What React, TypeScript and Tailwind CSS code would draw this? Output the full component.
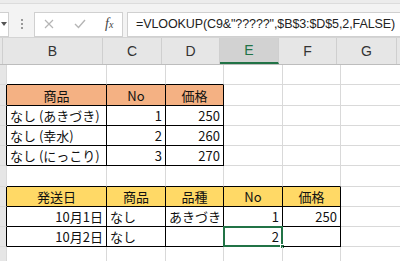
import React from "react";

const cols = [3, 100, 59, 58, 59, 58, 60, 10];
const rowHeights = [20, 21, 20, 20, 20, 21, 20, 20, 20, 20];

type Cell = { t?: string; align?: "l" | "r" | "c"; bg?: string };

// table regions: [rowStart,rowEnd,colStart,colEnd] (inclusive, col indexes into cols)
const tables = [
  [1, 4, 1, 3],
  [6, 8, 1, 5],
];

const inTable = (r: number, c: number) =>
  tables.some(([r0, r1, c0, c1]) => r >= r0 && r <= r1 && c >= c0 && c <= c1);

const data: Record<string, Cell> = {
  "1-1": { t: "商品", align: "c", bg: "bg-[#f4b183]" },
  "1-2": { t: "No", align: "c", bg: "bg-[#f4b183]" },
  "1-3": { t: "価格", align: "c", bg: "bg-[#f4b183]" },
  "2-1": { t: "なし (あきづき)" },
  "2-2": { t: "1", align: "r" },
  "2-3": { t: "250", align: "r" },
  "3-1": { t: "なし (幸水)" },
  "3-2": { t: "2", align: "r" },
  "3-3": { t: "260", align: "r" },
  "4-1": { t: "なし (にっこり)" },
  "4-2": { t: "3", align: "r" },
  "4-3": { t: "270", align: "r" },
  "6-1": { t: "発送日", align: "c", bg: "bg-[#ffd966]" },
  "6-2": { t: "商品", align: "c", bg: "bg-[#ffd966]" },
  "6-3": { t: "品種", align: "c", bg: "bg-[#ffd966]" },
  "6-4": { t: "No", align: "c", bg: "bg-[#ffd966]" },
  "6-5": { t: "価格", align: "c", bg: "bg-[#ffd966]" },
  "7-1": { t: "10月1日", align: "r" },
  "7-2": { t: "なし" },
  "7-3": { t: "あきづき" },
  "7-4": { t: "1", align: "r" },
  "7-5": { t: "250", align: "r" },
  "8-1": { t: "10月2日", align: "r" },
  "8-2": { t: "なし" },
  "8-4": { t: "2", align: "r" },
};

const letters = ["", "B", "C", "D", "E", "F", "G", ""];

export default function App() {
  return (
    <div
      className="w-[400px] h-[261px] overflow-hidden bg-white"
      style={{ fontFamily: '"Liberation Sans", "Noto Sans CJK JP", sans-serif' }}
    >
      {/* formula bar */}
      <div className="h-[38px] bg-[#f3f3f3] border-b border-[#d4d4d4] flex flex-col">
        <div className="h-[4px] bg-[#ececec] border-b border-[#dcdcdc]" />
        <div className="flex items-start pt-[8px] h-[34px]">
          <div className="shrink-0 w-[9px] h-[25px] bg-white border border-l-0 border-[#d0d0d0] flex items-center justify-end pr-[1px]">
            <svg width="6" height="4" viewBox="0 0 6 4">
              <path d="M0 0 L6 0 L3 4 Z" fill="#555" />
            </svg>
          </div>
          <div className="shrink-0 w-[25px] h-[25px] flex flex-col items-center justify-center gap-[2px]">
            <div className="w-[2px] h-[2px] bg-[#999]" />
            <div className="w-[2px] h-[2px] bg-[#999]" />
            <div className="w-[2px] h-[2px] bg-[#999]" />
          </div>
          <div className="shrink-0 w-[89px] h-[25px] bg-white border border-[#d0d0d0] flex items-center">
            <svg className="ml-[9px] shrink-0" width="10" height="10" viewBox="0 0 10 10">
              <path d="M1 1 L9 9 M9 1 L1 9" stroke="#b5b5b5" strokeWidth="1.2" />
            </svg>
            <svg className="ml-[20px] shrink-0" width="12" height="10" viewBox="0 0 12 10">
              <path d="M1 5 L4.5 8.5 L11 1" stroke="#b5b5b5" strokeWidth="1.4" fill="none" />
            </svg>
            <span
              className="ml-[19px] text-[14px] italic text-[#444] leading-none"
              style={{ fontFamily: '"Liberation Serif", serif' }}
            >
              f<span className="text-[10px]">x</span>
            </span>
          </div>
          <div className="ml-[4px] min-w-0 flex-1 h-[25px] bg-white border border-r-0 border-[#d0d0d0] flex items-center pl-[8px] text-[12.5px] tracking-[-0.1px] text-[#222] whitespace-nowrap">
            =VLOOKUP(C9&amp;&quot;?????&quot;,$B$3:$D$5,2,FALSE)
          </div>
        </div>
      </div>

      {/* column headers */}
      <div className="flex h-[27px] bg-[#e6e6e6] border-b border-[#bdbdbd]">
        {cols.map((w, i) => (
          <div
            key={i}
            style={{ width: w }}
            className={
              "shrink-0 flex items-center justify-center text-[14px] text-[#333] border-r border-[#cfcfcf] " +
              (i === 4 ? "bg-[#d2d2d2] border-b-2 border-b-[#217346] text-[#217346]" : "")
            }
          >
            {letters[i]}
          </div>
        ))}
      </div>

      {/* grid */}
      <div
        className="text-[13px] text-[#111]"
        style={{ fontFamily: '"Noto Sans CJK JP", "Liberation Sans", sans-serif' }}
      >
        {rowHeights.map((h, r) => (
          <div key={r} className="flex" style={{ height: h }}>
            {cols.map((w, c) => {
              const cell = data[`${r}-${c}`];
              const tb = inTable(r, c);
              const rightBlack = tb || inTable(r, c + 1);
              const bottomBlack = tb || inTable(r + 1, c);
              const active = r === 8 && c === 4;
              return (
                <div
                  key={c}
                  style={{ width: w }}
                  className={
                    "shrink-0 relative flex items-center border-r border-b px-[3px] whitespace-nowrap leading-none " +
                    (rightBlack ? "border-r-black " : "border-r-[#d9d9d9] ") +
                    (bottomBlack ? "border-b-black " : "border-b-[#d9d9d9] ") +
                    (c === 0 ? "bg-[#e6e6e6] border-r-[#bdbdbd] " : "") +
                    (cell?.bg ?? "") +
                    (cell?.align === "r" ? " justify-end" : cell?.align === "c" ? " justify-center" : "")
                  }
                >
                  {cell?.t}
                  {active && (
                    <div className="absolute -left-[1px] -top-[1px] w-[60px] h-[21px] border-2 border-[#217346]">
                      <div className="absolute -right-[4px] -bottom-[4px] w-[5px] h-[5px] bg-[#217346] border border-white" />
                    </div>
                  )}
                </div>
              );
            })}
          </div>
        ))}
      </div>
    </div>
  );
}
